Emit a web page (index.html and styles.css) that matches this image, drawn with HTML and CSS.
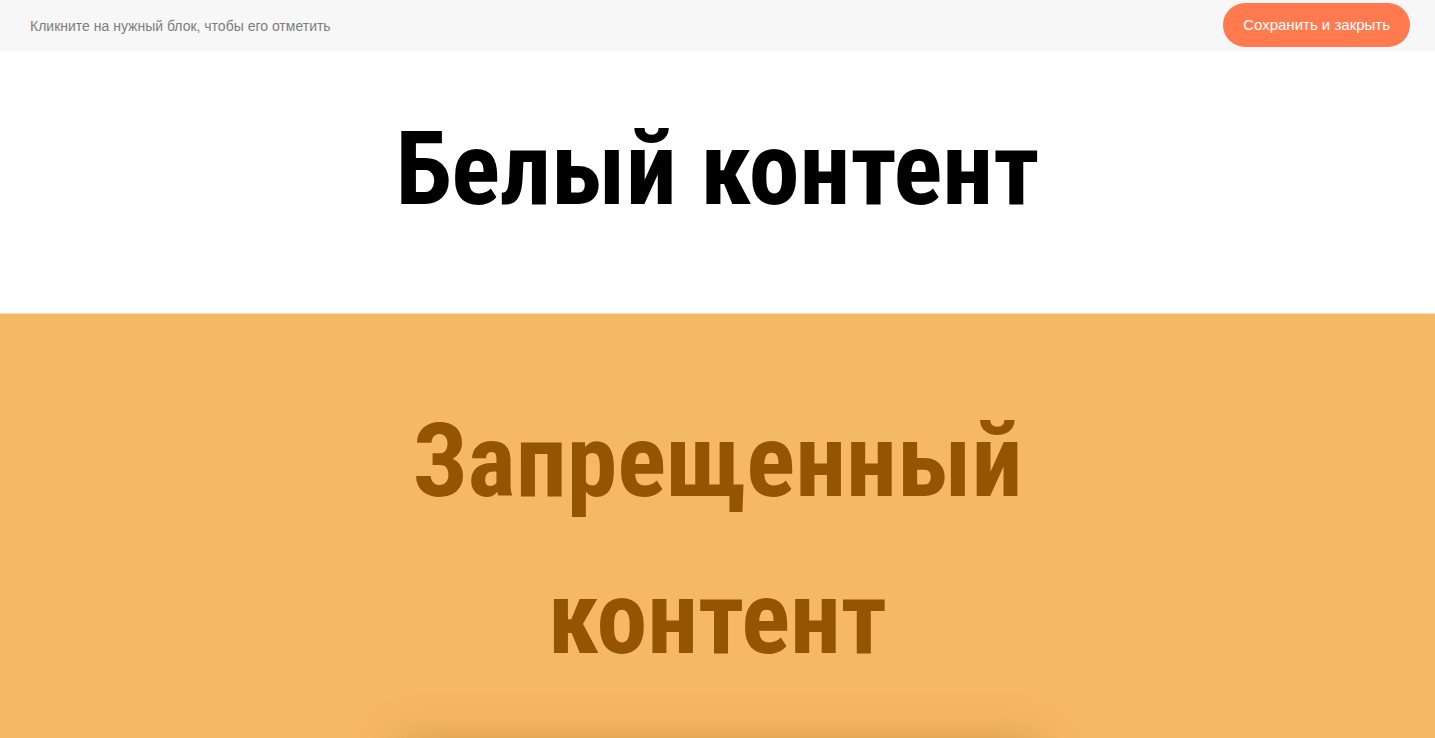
FILE: index.html
```html
<!DOCTYPE html>
<html lang="ru">
<head>
<meta charset="utf-8">
<link rel="stylesheet" href="styles.css">
</head>
<body>
<header class="topbar">
  <span class="hint">Кликните на нужный блок, чтобы его отметить</span>
  <button class="save">Сохранить и закрыть</button>
</header>
<section class="block white">
  <h1 class="title">Белый контент</h1>
</section>
<section class="block forbidden">
  <h1 class="title two">Запрещенный контент</h1>
  <div class="card"></div>
</section>
</body>
</html>
```
FILE: styles.css
```css
* { box-sizing: border-box; }
html, body { margin: 0; padding: 0; }
body { font-family: "Liberation Sans", Arial, sans-serif; background: #fff; overflow: hidden; }
.topbar {
  height: 51px;
  background: #f7f7f7;
  display: flex;
  align-items: center;
  justify-content: space-between;
  padding: 0 25px 0 30px;
}
.hint { font-size: 14px; color: #7d7d7d; }
.save {
  height: 44px;
  padding: 0 20px;
  border: none;
  border-radius: 22px;
  background: #ff7a4f;
  color: #fff;
  font-family: "Liberation Sans", Arial, sans-serif;
  font-size: 15px;
  margin-top: -2px;
}
.block { text-align: center; }
.white { height: 262px; padding-top: 53px; }
.title {
  margin: 0;
  font-family: Roboto, sans-serif;
  font-stretch: 75%;
  font-weight: 700;
  font-size: 102px;
  line-height: 130px;
}
.forbidden {
  background: #f5b865;
  border-top: 1px solid #fbe0b0;
  height: 500px;
  padding-top: 69px;
}
.two { color: #955400; line-height: 157px; width: 640px; margin: 0 auto; }
.card {
  width: 640px;
  height: 200px;
  margin: 46px auto 0;
  box-shadow: 0 0 40px rgba(170, 110, 30, 0.45);
  background: #f5b865;
}
```
